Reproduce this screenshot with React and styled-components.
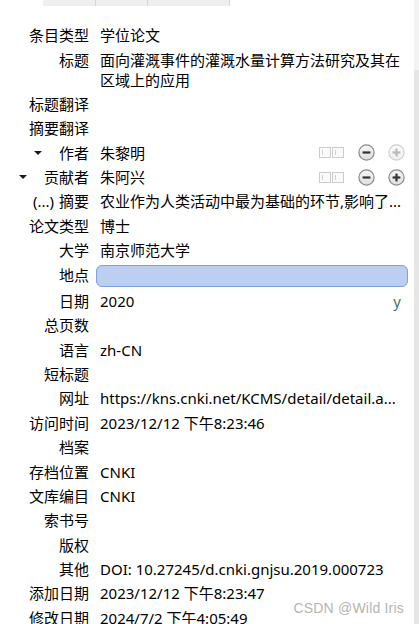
import React from "react";
import styled, { createGlobalStyle } from "styled-components";

const Global = createGlobalStyle`
  html, body { margin: 0; padding: 0; background: #fff; }
  body { font-family: "Noto Sans", "Noto Sans CJK SC", sans-serif; }
`;

const Frame = styled.div`
  width: 419px;
  height: 624px;
  overflow: hidden;
  display: flex;
  position: relative;
  background: #fff;
`;

const Main = styled.div`
  flex: 1;
  display: flex;
  flex-direction: column;
  padding-right: 6px;
`;

const Scrollbar = styled.div`
  width: 5px;
  display: flex;
  flex-direction: column;
  background: #f3f3f3;
`;

const Thumb = styled.div`
  margin-top: 70px;
  flex: 1;
  background: #e6e6e6;
`;

const TabStrip = styled.div`
  display: flex;
  margin-left: 43px;
  height: 6px;
  flex-shrink: 0;
`;

const Tab = styled.div`
  width: ${(p) => p.$w}px;
  height: 6px;
  background: #efefef;
  border-right: 1px solid #d4d4d4;
`;

const Fields = styled.div`
  padding-top: 17px;
  display: flex;
  flex-direction: column;
`;

const Row = styled.div`
  display: grid;
  grid-template-columns: 89px 1fr;
  column-gap: 11px;
  padding: 2.2px 0;
  line-height: 20px;
  font-size: 15px;
  color: #000;
  min-height: 20px;
`;

const Label = styled.div`
  display: flex;
  justify-content: flex-end;
  align-items: center;
  height: 20px;
  white-space: nowrap;
  gap: ${(p) => p.$gap || 0}px;
`;

const Twisty = styled.span`
  width: 0;
  height: 0;
  border-left: 4px solid transparent;
  border-right: 4px solid transparent;
  border-top: 4px solid #1a1a1a;
`;

const Value = styled.div`
  display: flex;
  align-items: center;
  justify-content: ${(p) => (p.$spread ? "space-between" : "flex-start")};
  padding-right: ${(p) => (p.$spread ? 7 : 0)}px;
  min-width: 0;
`;

const Text = styled.span`
  white-space: ${(p) => (p.$wrap ? "normal" : "nowrap")};
`;

const Hint = styled.span`
  color: #4f7466;
`;

const Field = styled.div`
  margin-left: -4px;
  height: 20px;
  border: 1px solid #7ba0e3;
  background: #bccff1;
  border-radius: 6px;
  box-sizing: content-box;
  flex: 1;
`;

const Tools = styled.div`
  margin-left: auto;
  display: flex;
  align-items: center;
  gap: 13px;
  padding-right: 3px;
`;

const SwitchIcon = () => (
  <svg width="26" height="11" viewBox="0 0 26 11">
    <rect x="0.5" y="0.5" width="11" height="10" fill="#fafafa" stroke="#cccccc" />
    <line x1="3.5" y1="3" x2="3.5" y2="8" stroke="#d0d0d0" />
    <rect x="13.5" y="0.5" width="11" height="10" fill="#fafafa" stroke="#cccccc" />
    <line x1="16.5" y1="3" x2="16.5" y2="8" stroke="#d0d0d0" />
  </svg>
);

const CircleIcon = ({ plus, faded }) => {
  const ring = faded ? "#cdcdcd" : "#8a8a8a";
  const mark = faded ? "#b9b9b9" : "#333333";
  const id = `g${plus ? 1 : 0}${faded ? 1 : 0}`;
  return (
    <svg width="17" height="17" viewBox="0 0 17 17">
      <defs>
        <linearGradient id={id} x1="0" y1="0" x2="0" y2="1">
          <stop offset="0" stopColor={faded ? "#fbfbfb" : "#f7f7f7"} />
          <stop offset="1" stopColor={faded ? "#f0f0f0" : "#dedede"} />
        </linearGradient>
      </defs>
      <circle cx="8.5" cy="8.5" r="7.6" fill={`url(#${id})`} stroke={ring} strokeWidth="1.2" />
      <line x1="4.6" y1="8.5" x2="12.4" y2="8.5" stroke={mark} strokeWidth="2.2" />
      {plus && <line x1="8.5" y1="4.6" x2="8.5" y2="12.4" stroke={mark} strokeWidth="2.2" />}
    </svg>
  );
};

const Watermark = styled.div`
  position: absolute;
  right: 15px;
  bottom: 8px;
  font-family: "Liberation Sans", Arial, sans-serif;
  font-size: 14px;
  color: #b4b4b4;
  letter-spacing: 0.2px;
`;

const fields = [
  { label: "条目类型", value: "学位论文" },
  { label: "标题", value: "面向灌溉事件的灌溉水量计算方法研究及其在区域上的应用", wrap: true },
  { label: "标题翻译" },
  { label: "摘要翻译" },
  { label: "作者", value: "朱黎明", creator: true, twisty: true, plusFaded: true },
  { label: "贡献者", value: "朱阿兴", creator: true, twisty: true },
  { label: "摘要", prefix: "(...)", value: "农业作为人类活动中最为基础的环节,影响了..." },
  { label: "论文类型", value: "博士" },
  { label: "大学", value: "南京师范大学" },
  { label: "地点", input: true },
  { label: "日期", value: "2020", hint: "y" },
  { label: "总页数" },
  { label: "语言", value: "zh-CN" },
  { label: "短标题" },
  { label: "网址", value: "https://kns.cnki.net/KCMS/detail/detail.a..." },
  { label: "访问时间", value: "2023/12/12 下午8:23:46" },
  { label: "档案" },
  { label: "存档位置", value: "CNKI" },
  { label: "文库编目", value: "CNKI" },
  { label: "索书号" },
  { label: "版权" },
  { label: "其他", value: "DOI: 10.27245/d.cnki.gnjsu.2019.000723" },
  { label: "添加日期", value: "2023/12/12 下午8:23:47" },
  { label: "修改日期", value: "2024/7/2 下午4:05:49" },
];

export default function App() {
  return (
    <>
      <Global />
      <Frame>
        <Main>
          <TabStrip>
            <Tab $w={52} />
            <Tab $w={51} />
            <Tab $w={81} />
          </TabStrip>
          <Fields>
            {fields.map((f) => (
              <Row key={f.label}>
                <Label $gap={f.twisty ? 17 : f.prefix ? 5 : 0}>
                  {f.twisty && <Twisty />}
                  {f.prefix && <span>{f.prefix}</span>}
                  <span>{f.label}</span>
                </Label>
                <Value $spread={!!f.hint}>
                  {f.input ? (
                    <Field />
                  ) : (
                    f.value && <Text $wrap={f.wrap}>{f.value}</Text>
                  )}
                  {f.hint && <Hint>{f.hint}</Hint>}
                  {f.creator && (
                    <Tools>
                      <SwitchIcon />
                      <CircleIcon />
                      <CircleIcon plus faded={f.plusFaded} />
                    </Tools>
                  )}
                </Value>
              </Row>
            ))}
          </Fields>
        </Main>
        <Scrollbar>
          <Thumb />
        </Scrollbar>
        <Watermark>CSDN @Wild Iris</Watermark>
      </Frame>
    </>
  );
}
